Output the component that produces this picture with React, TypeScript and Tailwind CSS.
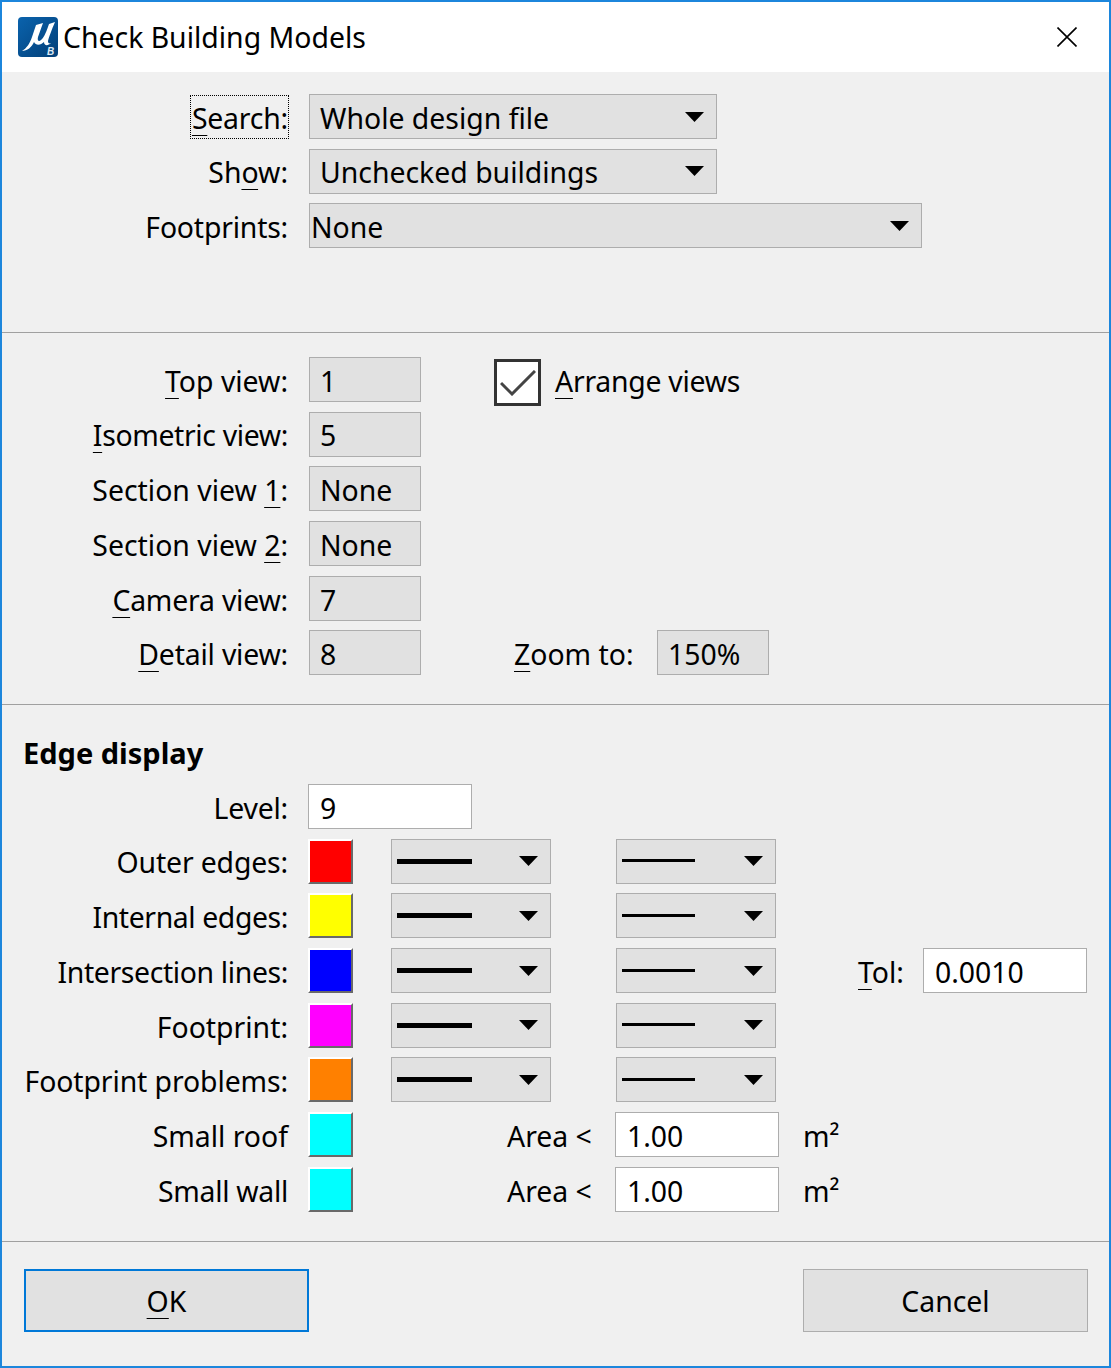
const uiFont = { fontFamily: '"Noto Sans", "Open Sans", sans-serif' };

function Key({ children }: { children: string }) {
  return <span className="underline decoration-1 underline-offset-[6px]">{children}</span>;
}

function Label({ children }: { children: React.ReactNode }) {
  return (
    <div className="flex h-[45px] w-[286px] shrink-0 items-center justify-end whitespace-pre pt-[3px]">
      {children}
    </div>
  );
}

function Caret() {
  return (
    <svg width="19" height="10" viewBox="0 0 19 10" className="shrink-0">
      <polygon points="0,0 19,0 9.5,10" fill="#000" />
    </svg>
  );
}

function Select({ text, width, pad = "pl-[10px]" }: { text: string; width: string; pad?: string }) {
  return (
    <div className={`flex h-[45px] items-center justify-between border border-[#adadad] bg-[#e1e1e1] pr-[12px] ${pad} ${width}`}>
      <span className="pt-[3px]">{text}</span>
      <Caret />
    </div>
  );
}

function ViewBox({ value }: { value: string }) {
  return (
    <div className="flex h-[45px] w-[112px] items-center border border-[#adadad] bg-[#e1e1e1] pl-[10px] pt-[3px]">
      {value}
    </div>
  );
}

function Input({ value, width }: { value: string; width: string }) {
  return (
    <div className={`flex h-[45px] items-center border border-[#adadad] bg-white pl-[11px] pt-[3px] ${width}`}>
      {value}
    </div>
  );
}

function Swatch({ color }: { color: string }) {
  return (
    <div
      className={`h-[45px] w-[45px] shrink-0 border-2 border-t-white border-l-white border-r-[#696969] border-b-[#696969] ${color}`}
    />
  );
}

function LineSelect({ thick, className = "" }: { thick?: boolean; className?: string }) {
  return (
    <div className={`flex h-[45px] w-[160px] shrink-0 items-center justify-between border border-[#adadad] bg-[#e1e1e1] pl-[5px] pr-[12px] ${className}`}>
      <div className={thick ? "h-[5px] w-[75px] bg-black" : "-mt-[1px] h-[3px] w-[73px] bg-black"} />
      <Caret />
    </div>
  );
}

function EdgeRow({ label, color, children }: { label: React.ReactNode; color: string; children?: React.ReactNode }) {
  return (
    <div className="flex items-center">
      <Label>{label}</Label>
      <div className="ml-[20px] flex items-center">
        <Swatch color={color} />
        {children}
      </div>
    </div>
  );
}

function LinePair() {
  return (
    <>
      <LineSelect thick className="ml-[38px]" />
      <LineSelect className="ml-[65px]" />
    </>
  );
}

function AreaField() {
  return (
    <div className="ml-[154px] flex items-center">
      <span className="w-[108px] whitespace-pre pt-[3px]">Area &lt;</span>
      <Input value="1.00" width="w-[164px]" />
      <span className="ml-[24px] pt-[3px]">m²</span>
    </div>
  );
}

function Logo() {
  return (
    <svg width="40" height="40" viewBox="0 0 40 40" className="shrink-0">
      <defs>
        <linearGradient id="logoBlue" x1="0" y1="0" x2="1" y2="1">
          <stop offset="0" stopColor="#0a63ad" />
          <stop offset="1" stopColor="#033f78" />
        </linearGradient>
      </defs>
      <rect width="40" height="40" rx="4" fill="url(#logoBlue)" />
      <path
        d="M4 34C9 31 12 26 14 20L18 8L25 6L20 20C19 24 21 25 23 23C26 21 29 13 31 7L37 5C34 12 31 20 30 24C30 26 31 27 33 26C30 29 26 29 26 25C23 28 18 29 16 25C14 30 9 34 4 34Z"
        fill="#fff"
      />
      <text x="29" y="38" fontSize="10" fontStyle="italic" fontWeight="700" fill="#dfeaf5" fontFamily="Liberation Sans, sans-serif">
        B
      </text>
    </svg>
  );
}

export default function App() {
  return (
    <div
      className="h-[1368px] w-[1111px] overflow-hidden border-2 border-[#1c86dc] bg-[#f0f0f0] text-[28.4px] leading-none text-black"
      style={uiFont}
    >
      <header className="flex h-[70px] items-center justify-between bg-white pl-[16px] pr-[32px]">
        <div className="flex items-center gap-[5px]">
          <Logo />
          <span className="pt-[1px]">Check Building Models</span>
        </div>
        <svg width="20" height="20" viewBox="0 0 20 20">
          <path d="M0.5 0.5L19.5 19.5M19.5 0.5L0.5 19.5" stroke="#000" strokeWidth="1.6" fill="none" />
        </svg>
      </header>

      <section className="flex h-[261px] flex-col gap-[9.7px] border-b border-[#a0a0a0] pt-[22px]">
        <div className="flex items-center">
          <Label>
            <span className="-mr-[1px] -mt-[3px] flex h-[44px] items-center border border-dotted border-black pl-[1px] pt-[3px] tracking-[-0.2px]">
              <span>
                <Key>S</Key>earch:
              </span>
            </span>
          </Label>
          <div className="ml-[21px]">
            <Select text="Whole design file" width="w-[408px]" />
          </div>
        </div>
        <div className="flex items-center">
          <Label>
            <span>
              Sh<Key>o</Key>w:
            </span>
          </Label>
          <div className="ml-[21px]">
            <Select text="Unchecked buildings" width="w-[408px]" />
          </div>
        </div>
        <div className="flex items-center">
          <Label>
            <span className="tracking-[-0.2px]">Footprints:</span>
          </Label>
          <div className="ml-[21px]">
            <Select text="None" width="w-[613px]" pad="pl-[1px]" />
          </div>
        </div>
      </section>

      <section className="flex h-[372px] flex-col gap-[9.7px] border-b border-[#a0a0a0] pt-[24px]">
        <div className="flex h-[45px] items-start">
          <Label>
            <span>
              <Key>T</Key>op view:
            </span>
          </Label>
          <div className="ml-[21px]">
            <ViewBox value="1" />
          </div>
          <div className="ml-[73px] mt-[2px] flex h-[47px] w-[47px] shrink-0 items-center justify-center border-[3px] border-[#333] bg-white">
            <svg width="36" height="26" viewBox="0 0 36 26">
              <path d="M1 13L12 24L35 1" stroke="#444" strokeWidth="3" fill="none" />
            </svg>
          </div>
          <span className="ml-[14px] flex h-[45px] items-center pt-[3px] tracking-[-0.25px]">
            <span>
              <Key>A</Key>rrange views
            </span>
          </span>
        </div>
        <div className="flex items-center">
          <Label>
            <span className="tracking-[-0.35px]">
              <Key>I</Key>sometric view:
            </span>
          </Label>
          <div className="ml-[21px]">
            <ViewBox value="5" />
          </div>
        </div>
        <div className="flex items-center">
          <Label>
            <span>
              Section view <Key>1</Key>:
            </span>
          </Label>
          <div className="ml-[21px]">
            <ViewBox value="None" />
          </div>
        </div>
        <div className="flex items-center">
          <Label>
            <span>
              Section view <Key>2</Key>:
            </span>
          </Label>
          <div className="ml-[21px]">
            <ViewBox value="None" />
          </div>
        </div>
        <div className="flex items-center">
          <Label>
            <span className="tracking-[-0.2px]">
              <Key>C</Key>amera view:
            </span>
          </Label>
          <div className="ml-[21px]">
            <ViewBox value="7" />
          </div>
        </div>
        <div className="flex items-center">
          <Label>
            <span className="tracking-[-0.2px]">
              <Key>D</Key>etail view:
            </span>
          </Label>
          <div className="ml-[21px]">
            <ViewBox value="8" />
          </div>
          <span className="ml-[93px] w-[143px] pt-[3px]">
            <Key>Z</Key>oom to:
          </span>
          <ViewBox value="150%" />
        </div>
      </section>

      <section className="flex h-[537px] flex-col border-b border-[#a0a0a0]">
        <h2 className="ml-[21px] mt-[33px] h-[46px] text-[29px] font-bold leading-[30px]">Edge display</h2>
        <div className="flex flex-col gap-[9.7px]">
          <div className="flex items-center">
            <Label>
              <span className="tracking-[-0.2px]">Level:</span>
            </Label>
            <div className="ml-[20px]">
              <Input value="9" width="w-[164px]" />
            </div>
          </div>
          <EdgeRow label={<span className="tracking-[-0.15px]">Outer edges:</span>} color="bg-[#ff0000]">
            <LinePair />
          </EdgeRow>
          <EdgeRow label={<span className="tracking-[-0.4px]">Internal edges:</span>} color="bg-[#ffff00]">
            <LinePair />
          </EdgeRow>
          <EdgeRow label={<span className="tracking-[-0.37px]">Intersection lines:</span>} color="bg-[#0000ff]">
            <LinePair />
            <span className="ml-[82px] w-[65px] pt-[3px]">
              <Key>T</Key>ol:
            </span>
            <Input value="0.0010" width="w-[164px]" />
          </EdgeRow>
          <EdgeRow label="Footprint:" color="bg-[#ff00ff]">
            <LinePair />
          </EdgeRow>
          <EdgeRow label={<span className="tracking-[-0.1px]">Footprint problems:</span>} color="bg-[#ff8000]">
            <LinePair />
          </EdgeRow>
          <EdgeRow label="Small roof" color="bg-[#00ffff]">
            <AreaField />
          </EdgeRow>
          <EdgeRow label={<span className="tracking-[-0.3px]">Small wall</span>} color="bg-[#00ffff]">
            <AreaField />
          </EdgeRow>
        </div>
      </section>

      <footer className="flex justify-between pl-[22px] pr-[21px] pt-[27px]">
        <button type="button" className="flex h-[63px] w-[285px] items-center justify-center border-2 border-[#0078d7] bg-[#e1e1e1] pt-[2px]">
          <span>
            <Key>O</Key>K
          </span>
        </button>
        <button type="button" className="flex h-[63px] w-[285px] items-center justify-center border border-[#adadad] bg-[#e1e1e1] pt-[2px]">
          Cancel
        </button>
      </footer>
    </div>
  );
}
